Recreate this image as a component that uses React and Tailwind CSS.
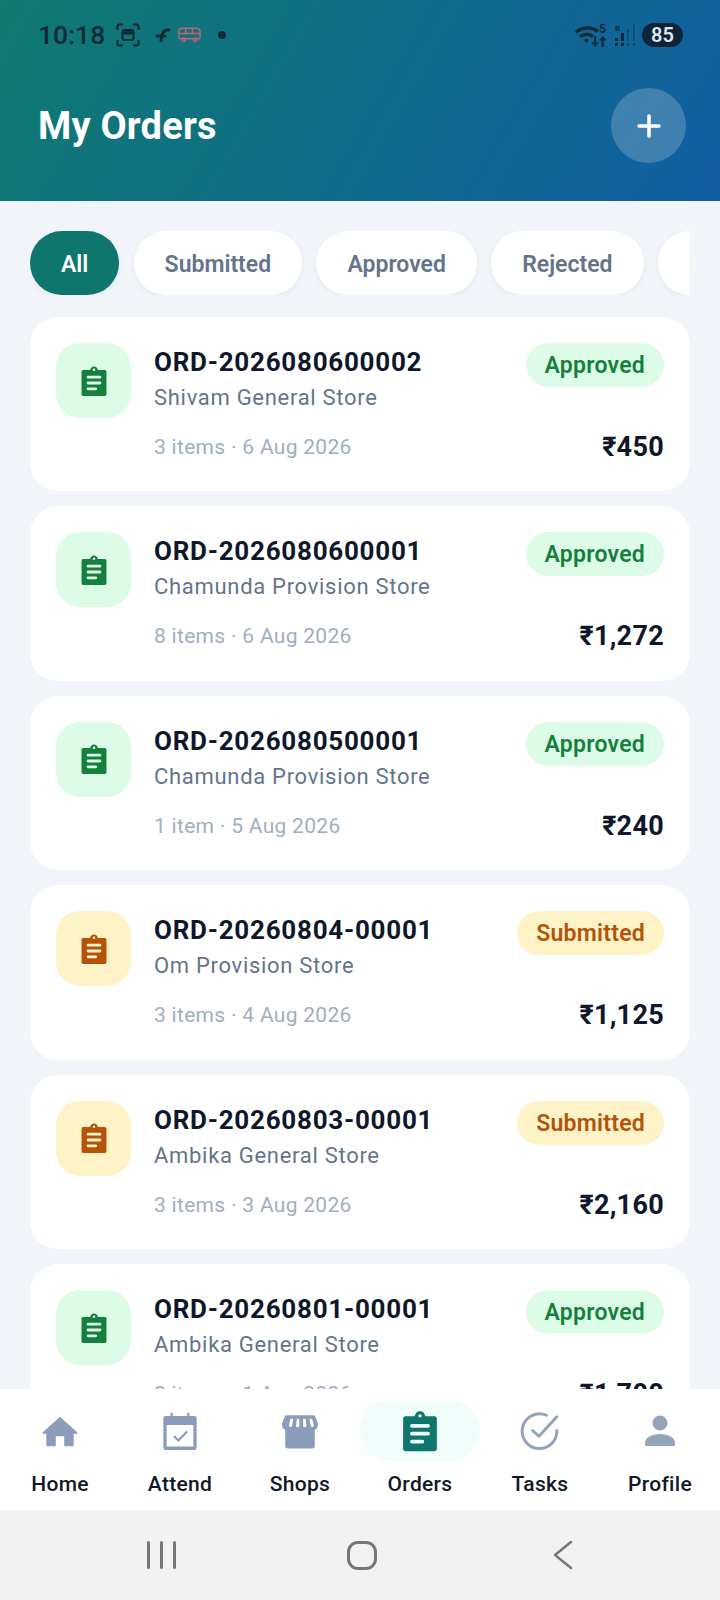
import { Plus } from 'lucide-react';

const orders = [
    { id: 'ORD-2026080600002', shop: 'Shivam General Store', meta: '3 items · 6 Aug 2026', total: '₹450', status: 'Approved' },
    { id: 'ORD-2026080600001', shop: 'Chamunda Provision Store', meta: '8 items · 6 Aug 2026', total: '₹1,272', status: 'Approved' },
    { id: 'ORD-2026080500001', shop: 'Chamunda Provision Store', meta: '1 item · 5 Aug 2026', total: '₹240', status: 'Approved' },
    { id: 'ORD-20260804-00001', shop: 'Om Provision Store', meta: '3 items · 4 Aug 2026', total: '₹1,125', status: 'Submitted' },
    { id: 'ORD-20260803-00001', shop: 'Ambika General Store', meta: '3 items · 3 Aug 2026', total: '₹2,160', status: 'Submitted' },
    { id: 'ORD-20260801-00001', shop: 'Ambika General Store', meta: '2 items · 1 Aug 2026', total: '₹1,700', status: 'Approved' },
];

const ClipboardIcon = ({ className }) => (
    <svg viewBox="0 0 24 24" className={className} fill="currentColor">
        <path fillRule="evenodd" d="M4.400 4.300h4.800C9.500 2.700 10.600 1.700 12 1.700s2.500 1 2.800 2.600h4.800c.7 0 1.200.5 1.200 1.200v15.800c0 .7-.5 1.200-1.200 1.200H4.400c-.7 0-1.200-.5-1.200-1.200V5.500c0-.7.5-1.200 1.200-1.200zM12 3.200a.9.9 0 1 0 0 1.800.9.9 0 0 0 0-1.800zM7.800 8.300a1 1 0 0 0 0 2h8.400a1 1 0 0 0 0-2H7.800zm0 4.100a1 1 0 0 0 0 2h8.400a1 1 0 0 0 0-2H7.800zm0 4.100a1 1 0 0 0 0 2h5.400a1 1 0 0 0 0-2H7.800z" />
    </svg>
);

const HomeIcon = () => (
    <svg viewBox="0 0 36 36" className="w-[38px] h-[38px] text-[#8b9dba]" fill="currentColor">
        <path d="M18 4.500 34.500 19.500a.6.6 0 0 1-.4 1H31V31a1.500 1.500 0 0 1-1.500 1.500H23a1 1 0 0 1-1-1V23h-8v8.500a1 1 0 0 1-1 1H6.500A1.500 1.500 0 0 1 5 31V20.500H1.900a.6.6 0 0 1-.4-1L18 4.500z" />
    </svg>
);

const AttendIcon = () => (
    <svg viewBox="0 0 36 36" className="w-10 h-10 text-[#8b9dba]" fill="currentColor">
        <path fillRule="evenodd" d="M9.500 1.500h2v3h13v-3h2v3H31a2 2 0 0 1 2 2V33a2 2 0 0 1-2 2H5a2 2 0 0 1-2-2V6.500a2 2 0 0 1 2-2h4.500v-3zM6 12.500V32h24V12.500H6z" />
        <path d="M12.500 22.500l4 4 8-8" fill="none" stroke="currentColor" strokeWidth="2" />
    </svg>
);

const ShopIcon = () => (
    <svg viewBox="0 0 36 36" className="w-[38px] h-[38px] text-[#8b9dba]" fill="currentColor">
        <path fillRule="evenodd" d="M5.500 3h25c1 0 1.600.6 2 1.500l2.500 6.500c.5 3-1.500 5.500-3 6V32a2.500 2.500 0 0 1-2.500 2.500h-23A2.500 2.500 0 0 1 4 32V17c-1.500-.5-3.500-3-3-6l2.500-6.500C3.900 3.600 4.500 3 5.500 3zM9 6.500 7.500 12.500a1.500 1.500 0 0 0 3 .5L11.500 6.500H9zm6 0-.7 6.500a1.500 1.500 0 0 0 3 0V6.500H15zm6 0v6.500a1.500 1.500 0 0 0 3 0L23.300 6.500H21zm6 0 1 6.500a1.500 1.500 0 0 0 3-.5L29.500 6.500H27z" />
    </svg>
);

const TasksIcon = () => (
    <svg viewBox="0 0 38 38" className="w-10 h-10 text-[#94a3b8]" fill="none" stroke="currentColor">
        <path d="M35 18.500A16.500 16.500 0 1 1 25 4" strokeWidth="2.800" strokeLinecap="round" />
        <path d="M12 18.500l6 5.500L35 5.500" strokeWidth="2.800" strokeLinecap="round" strokeLinejoin="round" />
    </svg>
);

const ProfileIcon = () => (
    <svg viewBox="0 0 36 36" className="w-9 h-9 text-[#94a3b8]" fill="currentColor">
        <circle cx="18" cy="10" r="7.500" />
        <path d="M3 30c0-6 8-9 15-9s15 3 15 9v1.500a1.500 1.500 0 0 1-1.500 1.500h-27A1.500 1.500 0 0 1 3 31.500V30z" />
    </svg>
);

const tabs = [
    { label: 'Home', icon: <HomeIcon /> },
    { label: 'Attend', icon: <AttendIcon /> },
    { label: 'Shops', icon: <ShopIcon /> },
    { label: 'Orders', icon: <ClipboardIcon className="w-[46px] h-[46px] text-[#0f766e]" />, active: true },
    { label: 'Tasks', icon: <TasksIcon /> },
    { label: 'Profile', icon: <ProfileIcon /> },
];

const StatusBar = () => (
    <div className="flex items-center justify-between pl-[38px] pr-[37px] h-[34px] text-[#0e2a36]">
        <div className="flex items-center">
            <span className="text-[26.500px] font-medium leading-none">10:18</span>
            <svg viewBox="0 0 24 24" className="w-6 h-6 ml-[11px]" fill="none" stroke="currentColor" strokeWidth="2.200">
                <path d="M1.500 7V3.500a2 2 0 0 1 2-2H7M17 1.500h3.500a2 2 0 0 1 2 2V7M22.500 17v3.500a2 2 0 0 1-2 2H17M7 22.500H3.500a2 2 0 0 1-2-2V17" />
                <rect x="6.500" y="7" width="11" height="10" rx="2" strokeWidth="2" />
                <rect x="7" y="7.500" width="10" height="4" fill="currentColor" stroke="none" />
            </svg>
            <svg viewBox="0 0 16 14" className="w-4 h-[14px] ml-[14px]" fill="none" stroke="currentColor" strokeWidth="3" strokeLinecap="round">
                <path d="M3 8h8M15 2C11 1.500 9.500 3 8.500 5.500L7 12.500" />
            </svg>
            <svg viewBox="0 0 24 16" className="w-[23px] h-[16px] ml-[8px] text-[#c0636e]" fill="none" stroke="currentColor" strokeWidth="1.500">
                <path d="M1 4c0-2 2-3 4-3h14c2 0 4 1 4 3v6c0 1-1 2-2 2H3c-1 0-2-1-2-2V4zM1 6.500h22M8 1v5.500M15 1v5.500" />
                <circle cx="6" cy="13" r="1.800" />
                <circle cx="18" cy="13" r="1.800" />
            </svg>
            <span className="w-2 h-2 rounded-full bg-current ml-[17px]" />
        </div>
        <div className="flex items-center">
            <svg viewBox="0 0 34 24" className="w-[34px] h-6" fill="currentColor">
                <path d="M1 8a19 19 0 0 1 24-1l-2 2.700A15.500 15.500 0 0 0 3 10.800L1 8zm4 4.500a13 13 0 0 1 15-.5l-2 2.700a9.800 9.800 0 0 0-11 .2L5 12.500zm4.500 4.300a6 6 0 0 1 5.500 0L12.500 20l-3-3.200z" />
                <text x="25" y="10" fontSize="12" fontWeight="700" fontFamily="Roboto, sans-serif">5</text>
                <path d="M20 13h2.200v6.500H25l-3.900 4.500-3.900-4.500H20V13zm7.500 11h2.200v-6.500h2.800L28.600 13l-3.900 4.500h2.800V24z" />
            </svg>
            <svg viewBox="0 0 24 24" className="w-6 h-6 ml-[6px]" fill="currentColor">
                <text x="1" y="8" fontSize="8" fontWeight="700" fontFamily="Roboto, sans-serif">R</text>
                <rect x="1" y="15" width="3" height="3" />
                <rect x="1" y="20" width="3" height="3" />
                <rect x="7" y="10" width="3" height="8" />
                <rect x="7" y="20" width="3" height="3" />
                <rect x="13" y="6" width="1.500" height="12" opacity="0.5" />
                <rect x="13" y="20" width="2" height="3" opacity="0.5" />
                <rect x="19" y="1" width="1.500" height="17" opacity="0.5" />
                <rect x="19" y="20" width="2" height="3" opacity="0.5" />
            </svg>
            <span className="ml-[4px] w-[41px] h-6 rounded-full bg-[#0c2438] text-[#dfe6ec] text-[20px] font-semibold leading-6 text-center">85</span>
        </div>
    </div>
);

const OrderCard = ({ order }) => {
    const approved = order.status === 'Approved';
    return (
        <div className="bg-white rounded-[28px] h-[174.400px] shrink-0 flex pl-[26px] pr-[26px] pt-[26px]">
            <div className={`w-[75px] h-[75px] rounded-[24px] flex items-center justify-center shrink-0 ${approved ? 'bg-[#dcfce7]' : 'bg-[#fef3c7]'}`}>
                <ClipboardIcon className={`w-[34px] h-[34px] ${approved ? 'text-[#15803d]' : 'text-[#b45309]'}`} />
            </div>
            <div className="flex-1 ml-[23px] min-w-0">
                <div className="flex items-start justify-between">
                    <div>
                        <p className="text-[26px] font-bold leading-[38px] tracking-[0.74px] text-[#0f172a]">{order.id}</p>
                        <p className="text-[22px] leading-[30px] mt-[2px] tracking-[0.7px] text-[#64748b]">{order.shop}</p>
                    </div>
                    <span className={`h-[44px] px-[19px] rounded-full text-[23px] font-semibold leading-[46px] tracking-[0.25px] ${approved ? 'bg-[#dcfce7] text-[#15803d]' : 'bg-[#fef3c7] text-[#b45309]'}`}>{order.status}</span>
                </div>
                <div className="flex items-center justify-between mt-[19px]">
                    <p className="text-[21px] leading-[30px] tracking-[0.3px] text-[#a0aec0]">{order.meta}</p>
                    <p className="text-[27px] font-bold leading-[30px] tracking-[0.3px] text-[#0f172a]">{order.total}</p>
                </div>
            </div>
        </div>
    );
};

export default function App() {
    return (
        <div className="w-[720px] h-[1600px] flex flex-col overflow-hidden bg-[#f1f5f9] font-['Roboto',sans-serif]">
            <header className="h-[201px] shrink-0 bg-[linear-gradient(120deg,#0f7a70,#115ea3)] pt-[18px]">
                <StatusBar />
                <div className="flex items-center justify-between pl-[38px] pr-[34px] mt-[36px]">
                    <h1 className="text-[38px] font-bold leading-[40px] tracking-[0.2px] text-white">My Orders</h1>
                    <button className="w-[75px] h-[75px] rounded-full bg-white/20 flex items-center justify-center text-white">
                        <Plus className="w-[34px] h-[34px]" strokeWidth={2.500} />
                    </button>
                </div>
            </header>

            <div className="mx-[30px] mt-[30px] shrink-0 flex gap-[14.300px] overflow-hidden">
                <span className="h-[64px] px-[31px] rounded-full bg-[#0f766e] text-white text-[23px] font-semibold leading-[67px] shadow-[0_2px_6px_rgba(15,23,42,0.05)] shrink-0">All</span>
                {['Submitted', 'Approved', 'Rejected', 'Delivered'].map((label) => (
                    <span key={label} className="h-[64px] px-[31px] rounded-full bg-white text-[#64748b] text-[23px] font-semibold leading-[67px] shadow-[0_2px_6px_rgba(15,23,42,0.05)] shrink-0">{label}</span>
                ))}
            </div>

            <main className="flex-1 min-h-0 overflow-hidden mx-[30px] mt-[22px] flex flex-col gap-[15.100px]">
                {orders.map((order) => (
                    <OrderCard key={order.id} order={order} />
                ))}
            </main>

            <nav className="h-[121px] shrink-0 bg-white grid grid-cols-6">
                {tabs.map((tab) => (
                    <div key={tab.label} className="flex flex-col items-center pt-[12px]">
                        <div className={`w-[120px] h-[60px] rounded-full flex items-center justify-center ${tab.active ? 'bg-[#f0fdfa]' : ''}`}>
                            {tab.icon}
                        </div>
                        <span className="mt-[9px] text-[21px] font-medium leading-[28px] tracking-[0.3px] text-[#111827]">{tab.label}</span>
                    </div>
                ))}
            </nav>

            <div className="h-[90px] shrink-0 bg-[#f2f2f2] flex items-center justify-between pl-[147px] pr-[147px] text-[#767676]">
                <div className="flex gap-[10px]">
                    <span className="w-[3px] h-[28px] bg-current rounded-full" />
                    <span className="w-[3px] h-[28px] bg-current rounded-full" />
                    <span className="w-[3px] h-[28px] bg-current rounded-full" />
                </div>
                <span className="w-[30px] h-[29px] rounded-[11px] border-[3px] border-current mr-[5px]" />
                <svg viewBox="0 0 20 30" className="w-5 h-[30px]" fill="none" stroke="currentColor" strokeWidth="2.500" strokeLinecap="round" strokeLinejoin="round">
                    <path d="M18 2 2 15l16 13" />
                </svg>
            </div>
        </div>
    );
}
